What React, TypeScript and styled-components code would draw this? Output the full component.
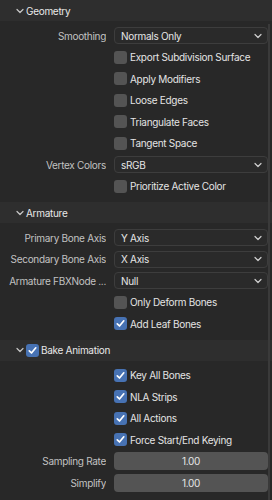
import { createGlobalStyle } from "styled-components";
import styled from "styled-components";

const GlobalStyle = createGlobalStyle`
  html, body {
    margin: 0;
    padding: 0;
    background: #282828;
  }
  body {
    font-family: Inter, "Noto Sans", sans-serif;
    font-size: 10px;
    letter-spacing: -0.3px;
    color: #dcdcdc;
  }
`;

type Row =
  | { kind: "select"; label: string; value: string }
  | { kind: "check"; label: string; checked: boolean }
  | { kind: "number"; label: string; value: string };

type Section = {
  title: string;
  toggle?: boolean;
  rows: Row[];
};

const sections: Section[] = [
  {
    title: "Geometry",
    rows: [
      { kind: "select", label: "Smoothing", value: "Normals Only" },
      { kind: "check", label: "Export Subdivision Surface", checked: false },
      { kind: "check", label: "Apply Modifiers", checked: false },
      { kind: "check", label: "Loose Edges", checked: false },
      { kind: "check", label: "Triangulate Faces", checked: false },
      { kind: "check", label: "Tangent Space", checked: false },
      { kind: "select", label: "Vertex Colors", value: "sRGB" },
      { kind: "check", label: "Prioritize Active Color", checked: false },
    ],
  },
  {
    title: "Armature",
    rows: [
      { kind: "select", label: "Primary Bone Axis", value: "Y Axis" },
      { kind: "select", label: "Secondary Bone Axis", value: "X Axis" },
      { kind: "select", label: "Armature FBXNode ...", value: "Null" },
      { kind: "check", label: "Only Deform Bones", checked: false },
      { kind: "check", label: "Add Leaf Bones", checked: true },
    ],
  },
  {
    title: "Bake Animation",
    toggle: true,
    rows: [
      { kind: "check", label: "Key All Bones", checked: true },
      { kind: "check", label: "NLA Strips", checked: true },
      { kind: "check", label: "All Actions", checked: true },
      { kind: "check", label: "Force Start/End Keying", checked: true },
      { kind: "number", label: "Sampling Rate", value: "1.00" },
      { kind: "number", label: "Simplify", value: "1.00" },
    ],
  },
];

const Page = styled.div`
  position: relative;
  width: 272px;
  height: 500px;
  overflow: hidden;
  background: #282828;
`;

const Panel = styled.div`
  display: flex;
  flex-direction: column;
`;

const Header = styled.div`
  height: 21px;
  display: flex;
  align-items: center;
  gap: 2px;
  padding-left: 16px;
  background: #2e2e2e;
  color: #e8e8e8;
`;

const Body = styled.div`
  padding: 4px 4px 5px 0;
  display: flex;
  flex-direction: column;
`;

const Line = styled.div`
  height: 21.5px;
  display: grid;
  grid-template-columns: 106px 1fr;
  column-gap: 8px;
  align-items: center;
`;

const Label = styled.span`
  text-align: right;
  color: #c2c2c2;
  white-space: nowrap;
  overflow: hidden;
`;

const Select = styled.div`
  height: 17px;
  box-sizing: border-box;
  border: 1px solid #3d3d3d;
  border-radius: 4px;
  background: #2a2a2a;
  display: flex;
  align-items: center;
  justify-content: space-between;
  padding: 0 5px 0 6px;
  color: #e6e6e6;
`;

const NumberField = styled.div`
  height: 18px;
  border-radius: 4px;
  background: #545454;
  display: flex;
  align-items: center;
  justify-content: center;
  color: #e6e6e6;
`;

const CheckWrap = styled.label`
  display: flex;
  align-items: center;
  gap: 3px;
  color: #e4e4e4;
  white-space: nowrap;
`;

const Box = styled.span<{ $on: boolean }>`
  width: 13px;
  height: 13px;
  flex: none;
  border-radius: 3px;
  background: ${(p) => (p.$on ? "#4772b3" : "#545454")};
  display: flex;
  align-items: center;
  justify-content: center;
`;

const Scrollbar = styled.div`
  position: absolute;
  top: 24px;
  bottom: 0;
  right: 2px;
  width: 2px;
  background: #3a3a3a;
`;

const Chevron = ({ size = 8, color = "#c8c8c8" }: { size?: number; color?: string }) => (
  <svg width={size} height={size} viewBox="0 0 8 8">
    <path d="M1 2.5 L4 5.5 L7 2.5" fill="none" stroke={color} strokeWidth="1.2" strokeLinecap="round" strokeLinejoin="round" />
  </svg>
);

const Check = ({ on }: { on: boolean }) => (
  <Box $on={on}>
    {on && (
      <svg width="11" height="11" viewBox="0 0 11 11">
        <path d="M2.3 5.8 L4.5 8 L8.8 2.8" fill="none" stroke="#ffffff" strokeWidth="1.7" strokeLinecap="round" strokeLinejoin="round" />
      </svg>
    )}
  </Box>
);

const renderRow = (row: Row, i: number) => {
  if (row.kind === "check") {
    return (
      <Line key={i}>
        <span />
        <CheckWrap>
          <Check on={row.checked} />
          {row.label}
        </CheckWrap>
      </Line>
    );
  }
  if (row.kind === "select") {
    return (
      <Line key={i}>
        <Label>{row.label}</Label>
        <Select>
          {row.value}
          <Chevron size={8} color="#d0d0d0" />
        </Select>
      </Line>
    );
  }
  return (
    <Line key={i}>
      <Label>{row.label}</Label>
      <NumberField>{row.value}</NumberField>
    </Line>
  );
};

export default function App() {
  return (
    <>
      <GlobalStyle />
      <Page>
        {sections.map((s) => (
          <Panel key={s.title}>
            <Header>
              <Chevron />
              {s.toggle && <Check on />}
              {s.title}
            </Header>
            <Body>{s.rows.map(renderRow)}</Body>
          </Panel>
        ))}
        <Scrollbar />
      </Page>
    </>
  );
}
